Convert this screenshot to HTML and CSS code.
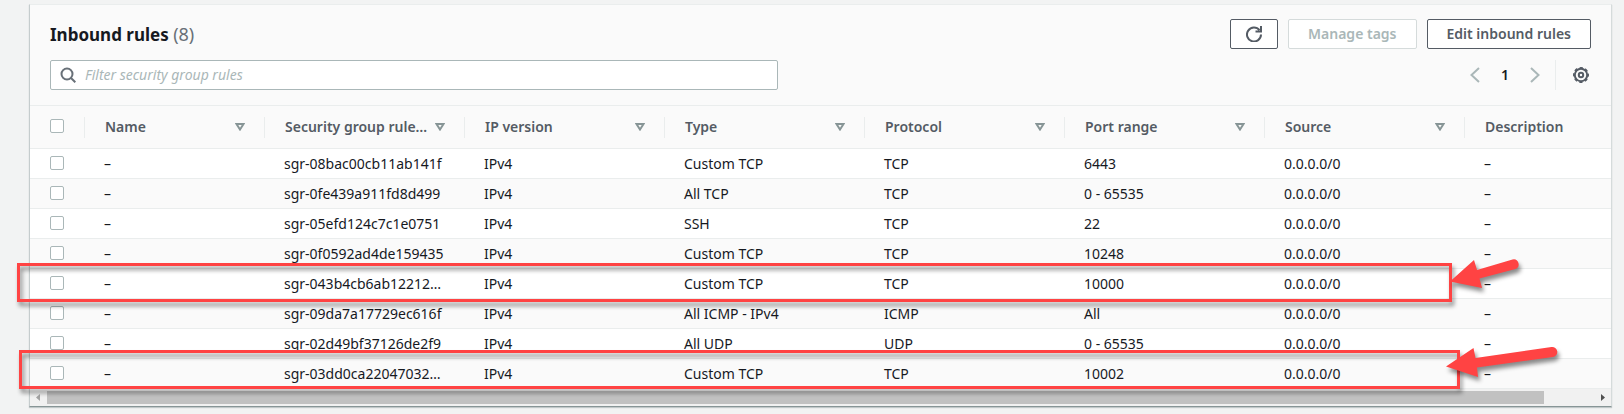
FILE: index.html
```html
<!DOCTYPE html>
<html lang="en">
<head>
<meta charset="utf-8">
<title>Inbound rules</title>
<link rel="stylesheet" href="styles.css">
</head>
<body>
<main class="panel">
  <header class="panel-header">
    <div class="title-row">
      <h2 class="title">Inbound rules <span class="count">(8)</span></h2>
      <div class="actions">
        <button class="btn btn-icon" type="button" aria-label="Refresh">
          <svg class="icon" viewBox="0 0 16 16" aria-hidden="true"><path d="M15 8.500A7 7 0 1 1 13.500 4.200M15 0v5.500H9.500"/></svg>
        </button>
        <button class="btn" type="button" disabled>Manage tags</button>
        <button class="btn" type="button">Edit inbound rules</button>
      </div>
    </div>
    <div class="tools-row">
      <label class="search">
        <svg class="icon search-icon" viewBox="0 0 16 16" aria-hidden="true"><circle cx="7" cy="7" r="5.5"/><path d="M11 11l4.3 4.3"/></svg>
        <input class="search-input" type="text" placeholder="Filter security group rules" aria-label="Filter security group rules">
      </label>
      <div class="pager">
        <button class="page-btn page-arrow" type="button" aria-label="Previous page"><svg class="icon" viewBox="0 0 16 16" aria-hidden="true"><path d="M12 1L4.500 8l7.500 7"/></svg></button>
        <button class="page-btn page-num" type="button">1</button>
        <button class="page-btn page-arrow" type="button" aria-label="Next page"><svg class="icon" viewBox="0 0 16 16" aria-hidden="true"><path d="M4 1l7.500 7L4 15"/></svg></button>
        <button class="page-btn settings" type="button" aria-label="Preferences"><svg class="icon" viewBox="0 0 16 16" aria-hidden="true"><circle cx="8" cy="8" r="6.200"/><circle cx="8" cy="8" r="7.300" stroke-width="1.400" stroke-dasharray="3.300 2.433" stroke-dashoffset="1.650"/><circle cx="8" cy="8" r="2.200"/></svg></button>
      </div>
    </div>
  </header>

  <div class="table-wrap">
    <table class="rules">
      <colgroup><col class="col-check"><col class="col-name"><col span="7" class="col-data"></colgroup>
      <thead>
        <tr>
          <th><input class="check" type="checkbox" aria-label="Select all rules"></th>
          <th><div class="head"><span class="head-text">Name</span><svg class="sort" viewBox="0 0 10 8" aria-hidden="true"><path d="M1.500 1h7L5 6.500z"/></svg></div></th>
          <th><div class="head"><span class="head-text">Security group rule…</span><svg class="sort" viewBox="0 0 10 8" aria-hidden="true"><path d="M1.500 1h7L5 6.500z"/></svg></div></th>
          <th><div class="head"><span class="head-text">IP version</span><svg class="sort" viewBox="0 0 10 8" aria-hidden="true"><path d="M1.500 1h7L5 6.500z"/></svg></div></th>
          <th><div class="head"><span class="head-text">Type</span><svg class="sort" viewBox="0 0 10 8" aria-hidden="true"><path d="M1.500 1h7L5 6.500z"/></svg></div></th>
          <th><div class="head"><span class="head-text">Protocol</span><svg class="sort" viewBox="0 0 10 8" aria-hidden="true"><path d="M1.500 1h7L5 6.500z"/></svg></div></th>
          <th><div class="head"><span class="head-text">Port range</span><svg class="sort" viewBox="0 0 10 8" aria-hidden="true"><path d="M1.500 1h7L5 6.500z"/></svg></div></th>
          <th><div class="head"><span class="head-text">Source</span><svg class="sort" viewBox="0 0 10 8" aria-hidden="true"><path d="M1.500 1h7L5 6.500z"/></svg></div></th>
          <th><div class="head"><span class="head-text">Description</span></div></th>
        </tr>
      </thead>
      <tbody>
        <tr><td><input class="check" type="checkbox" aria-label="Select rule 1"></td><td>–</td><td>sgr-08bac00cb11ab141f</td><td>IPv4</td><td>Custom TCP</td><td>TCP</td><td>6443</td><td>0.0.0.0/0</td><td>–</td></tr>
        <tr><td><input class="check" type="checkbox" aria-label="Select rule 2"></td><td>–</td><td>sgr-0fe439a911fd8d499</td><td>IPv4</td><td>All TCP</td><td>TCP</td><td>0 - 65535</td><td>0.0.0.0/0</td><td>–</td></tr>
        <tr><td><input class="check" type="checkbox" aria-label="Select rule 3"></td><td>–</td><td>sgr-05efd124c7c1e0751</td><td>IPv4</td><td>SSH</td><td>TCP</td><td>22</td><td>0.0.0.0/0</td><td>–</td></tr>
        <tr><td><input class="check" type="checkbox" aria-label="Select rule 4"></td><td>–</td><td>sgr-0f0592ad4de159435</td><td>IPv4</td><td>Custom TCP</td><td>TCP</td><td>10248</td><td>0.0.0.0/0</td><td>–</td></tr>
        <tr><td><input class="check" type="checkbox" aria-label="Select rule 5"></td><td>–</td><td>sgr-043b4cb6ab12212…</td><td>IPv4</td><td>Custom TCP</td><td>TCP</td><td>10000</td><td>0.0.0.0/0</td><td>–</td></tr>
        <tr><td><input class="check" type="checkbox" aria-label="Select rule 6"></td><td>–</td><td>sgr-09da7a17729ec616f</td><td>IPv4</td><td>All ICMP - IPv4</td><td>ICMP</td><td>All</td><td>0.0.0.0/0</td><td>–</td></tr>
        <tr><td><input class="check" type="checkbox" aria-label="Select rule 7"></td><td>–</td><td>sgr-02d49bf37126de2f9</td><td>IPv4</td><td>All UDP</td><td>UDP</td><td>0 - 65535</td><td>0.0.0.0/0</td><td>–</td></tr>
        <tr><td><input class="check" type="checkbox" aria-label="Select rule 8"></td><td>–</td><td>sgr-03dd0ca22047032…</td><td>IPv4</td><td>Custom TCP</td><td>TCP</td><td>10002</td><td>0.0.0.0/0</td><td>–</td></tr>
      </tbody>
    </table>
  </div>
  <div class="scrollbar" aria-hidden="true">
    <svg class="scroll-arrow scroll-left" viewBox="0 0 17 17"><path d="M10 5v7L6 8.500z"/></svg>
    <div class="scroll-track"><div class="scroll-thumb" style="width: 96.75%"></div></div>
    <svg class="scroll-arrow" viewBox="0 0 17 17"><path d="M7 5v7l4-3.500z"/></svg>
  </div>

  <div class="mark mark-first"></div>
  <div class="mark mark-second"></div>
  <svg class="arrow arrow-first" viewBox="0 0 80 50" aria-hidden="true"><path d="M4 25.500L28 4l3 10L66.500 3.500a5 5 0 0 1 3 9.500L33.500 22.500l2.500 9.500z"/></svg>
  <svg class="arrow arrow-second" viewBox="0 0 120 50" aria-hidden="true"><path d="M4 23.500L31.500 5l2 10L109.500 4a5 5 0 0 1 1.500 10L35 24.500l1 9.500z"/></svg>
</main>
</body>
</html>
```
FILE: styles.css
```css
* { box-sizing: border-box; }

body {
  margin: 0;
  background: #f2f3f3;
  color: #16191f;
  font: 14px/22px "Noto Sans", "Open Sans", sans-serif;
}

button, input { font: inherit; }

.panel {
  position: relative;
  margin: 4px 12px 7px 29px;
  background: #fafafa;
  border: 1px solid #d5dbdb;
  border-top-color: #eaeded;
  border-left-color: #c5cccd;
  border-bottom-color: #879596;
  box-shadow: 0 1px 1px rgba(0, 28, 36, 0.2);
}

.panel-header { padding: 14px 20px 15px; }

.title-row, .tools-row {
  display: flex;
  align-items: center;
  justify-content: space-between;
}
.tools-row { margin-top: 11px; }

.title { margin: 0; font-size: 17px; line-height: 28px; font-weight: 700; }
.count { color: #687078; font-size: 18px; font-weight: 400; }

.actions { display: flex; gap: 10px; }

.btn {
  height: 30px;
  padding: 0 19px;
  background: #fff;
  border: 1px solid #545b64;
  border-radius: 2px;
  color: #545b64;
  font-weight: 600;
}
.btn:disabled { border-color: #d5dbdb; color: #aab7b8; }
.btn-icon { display: flex; align-items: center; padding: 0 15px; }

.icon {
  display: block;
  width: 16px;
  height: 16px;
  fill: none;
  stroke: currentColor;
  stroke-width: 2;
}

.search {
  display: flex;
  align-items: center;
  gap: 9px;
  flex: 0 1 728px;
  height: 30px;
  padding: 0 9px;
  background: #fff;
  border: 1px solid #aab7b8;
  border-radius: 2px;
  color: #687078;
}
.search-icon { flex: none; }
.search-input {
  flex: 1;
  min-width: 0;
  padding: 0;
  border: 0;
  outline: 0;
  background: transparent;
}
.search-input::placeholder { color: #aab7b8; font-style: italic; opacity: 1; }

.pager { display: flex; align-items: center; }
.page-btn {
  display: flex;
  align-items: center;
  justify-content: center;
  height: 30px;
  padding: 0;
  border: 0;
  background: transparent;
  color: #545b64;
}
.page-arrow { width: 24px; color: #aab7b8; }
.page-num { width: 36px; color: #16191f; font-weight: 600; }
.settings {
  width: 36px;
  margin-left: 8px;
  padding-right: 2px;
  justify-content: flex-end;
  border-left: 1px solid #eaeded;
}

.table-wrap { overflow: hidden; }

.rules {
  width: 100%;
  min-width: 1635px;
  table-layout: fixed;
  border-collapse: separate;
  border-spacing: 0;
}
.col-check { width: 55px; }
.col-name { width: 180px; }
.col-data { width: 200px; }

.rules th {
  position: relative;
  height: 44px;
  padding: 0 20px;
  border-top: 1px solid #eaeded;
  border-bottom: 1px solid #eaeded;
  color: #545b64;
  font-weight: 600;
  text-align: left;
}
.rules th:not(:last-child)::after {
  content: "";
  position: absolute;
  top: 11px;
  right: 0;
  height: 21px;
  border-right: 1px solid #eaeded;
}
.head { display: flex; align-items: center; justify-content: space-between; gap: 4px; }
.head-text { white-space: nowrap; }
.sort {
  flex: none;
  width: 10px;
  height: 8px;
  fill: none;
  stroke: #879596;
  stroke-width: 2;
}

.rules td {
  height: 30px;
  padding: 0 10px 0 19px;
  border-bottom: 1px solid #eaeded;
  background: #fff;
  white-space: nowrap;
}
.rules tr:nth-child(even) td { background: #fafafa; }
.rules td:first-child { padding-left: 20px; }

.check {
  appearance: none;
  display: block;
  width: 14px;
  height: 14px;
  margin: 0 0 2px;
  background: #fff;
  border: 1px solid #aab7b8;
  border-radius: 2px;
}

.scrollbar { display: flex; height: 17px; background: #f1f1f1; }
.scroll-arrow { flex: none; width: 17px; height: 17px; fill: #505050; }
.scroll-left { fill: #a3a3a3; }
.scroll-track { flex: 1; padding: 2px 0; }
.scroll-thumb { height: 13px; background: #c1c1c1; }

.mark {
  position: absolute;
  height: 39px;
  border: 3px solid #ff4343;
  filter: drop-shadow(2px 4px 2px rgba(0, 0, 0, 0.45));
  pointer-events: none;
}
.mark-first { top: 258px; left: -13px; right: 159px; }
.mark-second { top: 345px; left: -11px; right: 151px; }

.arrow {
  position: absolute;
  fill: #ff4343;
  filter: drop-shadow(2px 4px 2px rgba(0, 0, 0, 0.45));
  pointer-events: none;
}
.arrow-first { top: 251px; right: 85px; width: 80px; height: 50px; }
.arrow-second { top: 338px; right: 49px; width: 120px; height: 50px; }
```
